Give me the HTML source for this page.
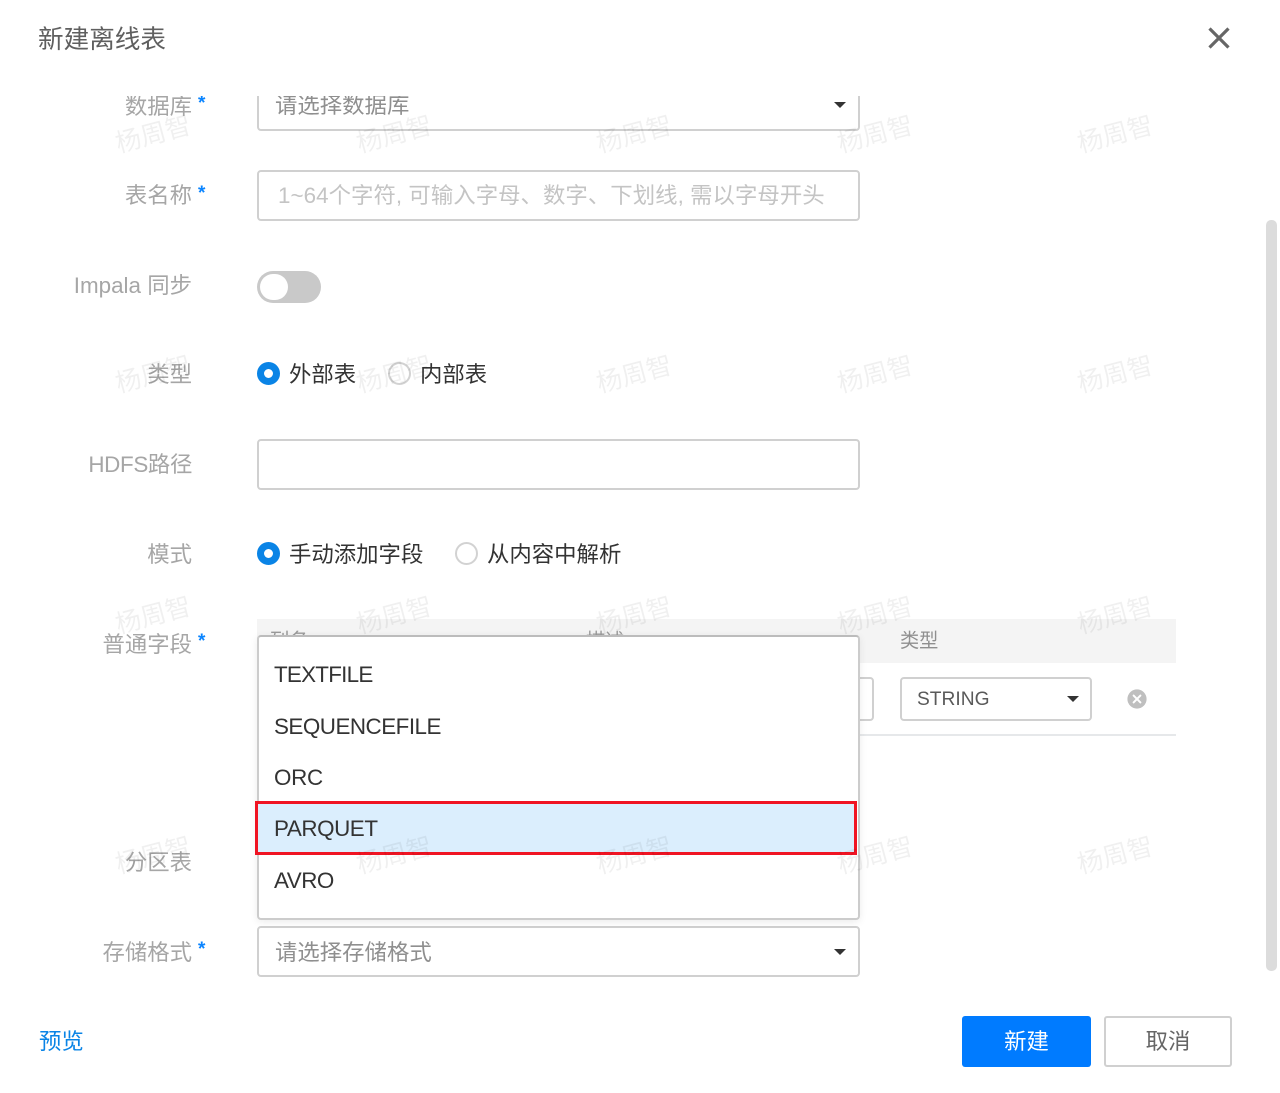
<!DOCTYPE html>
<html lang="zh-CN"><head><meta charset="utf-8"><title>新建离线表</title>
<style>
html,body{margin:0;padding:0;background:#fff}
body{width:1280px;height:1093px;position:relative;overflow:hidden;font-family:"Liberation Sans","Noto Sans CJK SC",sans-serif;font-size:22.4px}
.a{position:absolute;box-sizing:border-box}
.t{position:absolute;white-space:nowrap;line-height:30px;height:30px}
.l{right:1088px;color:#a6a6a6;text-align:right}
.s{position:absolute;color:#0a84ff;font-size:19px;left:198px;line-height:22px;font-weight:bold}
.box{position:absolute;box-sizing:border-box;border:2px solid #d0d0d0;border-radius:4px;background:#fff}
.arr{position:absolute;width:0;height:0;border-left:6.5px solid transparent;border-right:6.5px solid transparent;border-top:6.5px solid #333}
.r1{position:absolute;width:23px;height:23px;border-radius:50%;border:7px solid #0a84e6;box-sizing:border-box;background:#fff}
.r0{position:absolute;width:23px;height:23px;border-radius:50%;border:2px solid #d2d2d2;box-sizing:border-box;background:#fff}
.d{color:#333}
.item{position:absolute;left:274px;color:#333;line-height:30px;height:30px;white-space:nowrap;letter-spacing:-.5px}
.w{position:absolute;font-size:25.6px;line-height:30px;color:rgba(0,0,0,.06);transform:rotate(-15deg);white-space:nowrap;z-index:20;pointer-events:none}
</style></head><body>

<div class="t" style="left:38px;top:25px;font-size:25.6px;color:#5f5f5f">新建离线表</div>
<svg class="a" style="left:1206px;top:25px" width="26" height="26" viewBox="0 0 26 26"><path d="M3.5 3.5L22.5 22.5M22.5 3.5L3.5 22.5" stroke="#666" stroke-width="3.2" fill="none"/></svg>

<!-- scrollbar -->
<div class="a" style="left:1266px;top:220px;width:11px;height:751px;background:#dcdcdc;border-radius:5px"></div>

<!-- db select, clipped at top -->
<div class="a" style="left:0;top:96px;width:1280px;height:40px;overflow:hidden">
  <div class="box" style="left:257px;top:-15px;width:603px;height:50px"></div>
  <div class="t" style="left:275px;top:-5px;color:#8f8f8f">请选择数据库</div>
  <div class="arr" style="left:834px;top:6px"></div>
  <div class="t l" style="top:-4px">数据库</div>
  <div class="s" style="top:-3px">*</div>
</div>

<div class="t l" style="top:181px">表名称</div><div class="s" style="top:183px">*</div>
<div class="box" style="left:257px;top:170px;width:603px;height:51px"></div>
<div class="t" style="left:278px;top:181px;color:#c4c4c4;letter-spacing:.04px">1~64个字符, 可输入字母、数字、下划线, 需以字母开头</div>

<div class="t l" style="top:271px">Impala 同步</div>
<div class="a" style="left:257px;top:271px;width:64px;height:32px;border-radius:16px;background:#c9c9c9"></div>
<div class="a" style="left:260px;top:274px;width:28px;height:26px;border-radius:13px;background:#fff"></div>

<div class="t l" style="top:360px">类型</div>
<div class="r1" style="left:256.5px;top:362px"></div>
<div class="t d" style="left:289px;top:360px">外部表</div>
<div class="r0" style="left:388px;top:362px"></div>
<div class="t d" style="left:420px;top:360px">内部表</div>

<div class="t l" style="top:450px;letter-spacing:-.35px">HDFS路径</div>
<div class="box" style="left:257px;top:439px;width:603px;height:51px"></div>

<div class="t l" style="top:540px">模式</div>
<div class="r1" style="left:256.5px;top:542px"></div>
<div class="t d" style="left:289px;top:540px">手动添加字段</div>
<div class="r0" style="left:455px;top:542px"></div>
<div class="t d" style="left:487px;top:540px">从内容中解析</div>

<div class="t l" style="top:630px">普通字段</div><div class="s" style="top:631px">*</div>

<!-- table -->
<div class="a" style="left:257px;top:619px;width:919px;height:44px;background:#f4f4f4"></div>
<div class="t" style="left:270px;top:627px;font-size:19.2px;color:#9a9a9a">列名</div>
<div class="t" style="left:586px;top:627px;font-size:19.2px;color:#9a9a9a">描述</div>
<div class="t" style="left:900px;top:627px;font-size:19.2px;color:#8f8f8f">类型</div>
<div class="a" style="left:257px;top:734px;width:919px;height:2px;background:#e6e8ea"></div>
<div class="box" style="left:600px;top:677px;width:274px;height:44px"></div>
<div class="box" style="left:900px;top:677px;width:192px;height:44px"></div>
<div class="t" style="left:917px;top:685px;font-size:19.2px;color:#5a5a5a">STRING</div>
<div class="arr" style="left:1067px;top:696px"></div>
<svg class="a" style="left:1127px;top:689px" width="20" height="20" viewBox="0 0 20 20"><circle cx="10" cy="10" r="9.6" fill="#bfbfbf"/><path d="M6.6 6.6L13.4 13.4M13.4 6.6L6.6 13.4" stroke="#fff" stroke-width="2" stroke-linecap="round"/></svg>

<div class="t l" style="top:848px">分区表</div>

<!-- dropdown -->
<div class="a" style="left:257px;top:635px;width:603px;height:285px;background:#fff;border:2px solid #cccccc;border-top-color:#bcbcbc;border-radius:4px;box-shadow:0 2px 8px rgba(0,0,0,.08);z-index:5"></div>
<div class="a" style="left:255px;top:801px;width:602px;height:54px;background:#dbeefd;border:3px solid #f01423;z-index:6"></div>
<div class="item" style="top:660px;z-index:7;letter-spacing:-.75px">TEXTFILE</div>
<div class="item" style="top:712px;z-index:7">SEQUENCEFILE</div>
<div class="item" style="top:763px;z-index:7;letter-spacing:-.3px">ORC</div>
<div class="item" style="top:814px;z-index:7;letter-spacing:-.43px">PARQUET</div>
<div class="item" style="top:866px;z-index:7">AVRO</div>

<!-- storage -->
<div class="t l" style="top:938px">存储格式</div><div class="s" style="top:939px">*</div>
<div class="box" style="left:257px;top:926px;width:603px;height:51px"></div>
<div class="t" style="left:275px;top:938px;color:#8f8f8f">请选择存储格式</div>
<div class="arr" style="left:834px;top:949px"></div>

<!-- footer -->
<div class="t" style="left:39px;top:1027px;color:#0a84e6">预览</div>
<div class="a" style="left:962px;top:1016px;width:129px;height:51px;background:#007bff;border-radius:3px;color:#fff;text-align:center;line-height:52px">新建</div>
<div class="a" style="left:1104px;top:1016px;width:128px;height:51px;background:#fff;border:2px solid #d0d0d0;border-radius:3px;color:#666;text-align:center;line-height:48px">取消</div>

<!-- watermarks -->
<div class="w" style="left:115px;top:120px">杨周智</div><div class="w" style="left:356px;top:120px">杨周智</div><div class="w" style="left:596px;top:120px">杨周智</div><div class="w" style="left:837px;top:120px">杨周智</div><div class="w" style="left:1077px;top:120px">杨周智</div>
<div class="w" style="left:115px;top:360px">杨周智</div><div class="w" style="left:356px;top:360px">杨周智</div><div class="w" style="left:596px;top:360px">杨周智</div><div class="w" style="left:837px;top:360px">杨周智</div><div class="w" style="left:1077px;top:360px">杨周智</div>
<div class="w" style="left:115px;top:601px">杨周智</div><div class="w" style="left:356px;top:601px">杨周智</div><div class="w" style="left:596px;top:601px">杨周智</div><div class="w" style="left:837px;top:601px">杨周智</div><div class="w" style="left:1077px;top:601px">杨周智</div>
<div class="w" style="left:115px;top:841px">杨周智</div><div class="w" style="left:356px;top:841px">杨周智</div><div class="w" style="left:596px;top:841px">杨周智</div><div class="w" style="left:837px;top:841px">杨周智</div><div class="w" style="left:1077px;top:841px">杨周智</div>
</body></html>
